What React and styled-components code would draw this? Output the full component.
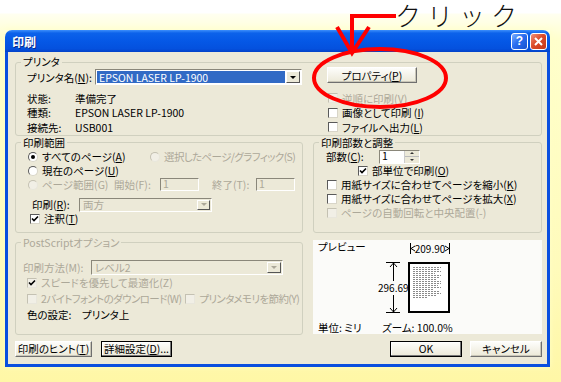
import React from "react";
import styled, { createGlobalStyle } from "styled-components";

const GlobalStyle = createGlobalStyle`
  html, body { margin: 0; padding: 0; }
  body { font-family: "Noto Sans CJK JP", "Liberation Sans", sans-serif; }
`;

const GRAY = "#ACA899";

const Stage = styled.div`
  position: relative;
  width: 561px;
  height: 382px;
  overflow: hidden;
  box-sizing: border-box;
  padding: 30px 0 0 5px;
  background: linear-gradient(to bottom, #ffffff 0, #ffffff 13px, #fffff0 14px, #ffffcc 40px, #fffbbb 70%, #fff7a6 100%);
`;

const Window = styled.div`
  width: 545px;
  height: 337px;
  display: flex;
  flex-direction: column;
  box-shadow: 0 0 6px rgba(255, 255, 200, 0.9);
`;

const TitleBar = styled.div`
  height: 22px;
  flex: none;
  display: flex;
  align-items: center;
  padding: 0 3px 0 7px;
  border-radius: 7px 7px 0 0;
  background: linear-gradient(#3d8ffc 0%, #0c62ea 14%, #0558e6 50%, #0451de 85%, #0342c9 100%);
`;

const Title = styled.span`
  flex: 1;
  color: #fff;
  font-size: 12px;
  font-weight: bold;
  text-shadow: 1px 1px #0b2a8c;
`;

const CaptionButton = styled.span`
  width: 17px;
  height: 17px;
  margin-left: 2px;
  box-sizing: border-box;
  border: 1px solid #fff;
  border-radius: 3px;
  display: flex;
  align-items: center;
  justify-content: center;
  color: #fff;
  font: bold 12px "Liberation Sans", sans-serif;
  background: ${(p) =>
    p.$close
      ? "linear-gradient(135deg, #f0917a, #dc4c2a 45%, #c6381a)"
      : "linear-gradient(135deg, #7fb0ff, #2a6ef0 45%, #1a52d0)"};
`;

const Body = styled.div`
  flex: 1;
  background: #ece9d8;
  border: 3px solid #0a4fdf;
  border-top: none;
  padding: 3px 5px 0 7px;
  display: grid;
  grid-template-columns: 288px 229px;
  column-gap: 10px;
  align-content: start;
  font-size: 10.5px;
  font-feature-settings: "palt";
  color: #000;
`;

const Group = styled.fieldset`
  margin: ${(p) => p.$mt || 0}px 0 0 0;
  padding: 0 0 ${(p) => p.$pb || 0}px 0;
  min-width: 0;
  border: 1px solid #d0d0bf;
  border-radius: 3px;
  grid-column: ${(p) => (p.$span ? "1 / -1" : "auto")};
`;

const Legend = styled.legend`
  margin-left: 5px;
  padding: 0 2px;
  line-height: 14px;
  font-size: 10.5px;
  color: ${(p) => (p.$disabled ? GRAY : "#000")};
`;

const Row = styled.div`
  display: flex;
  align-items: center;
  height: ${(p) => p.$h || 14}px;
  padding-left: ${(p) => p.$pl || 0}px;
  margin-top: ${(p) => p.$mt || 0}px;
  white-space: nowrap;
  color: ${(p) => (p.$disabled ? GRAY : "#000")};
`;

const Label = styled.span`
  width: ${(p) => (p.$w ? `${p.$w}px` : "auto")};
  margin-right: ${(p) => p.$mr || 0}px;
  flex: none;
  letter-spacing: ${(p) => (p.$tight ? "-0.6px" : "normal")};
  color: ${(p) => (p.$disabled ? GRAY : "inherit")};
`;

const Select = styled.span`
  width: ${(p) => p.$w}px;
  height: ${(p) => p.$h || 16}px;
  flex: none;
  box-sizing: border-box;
  border: 1px solid;
  border-color: #8a877a #ffffff #ffffff #8a877a;
  background: ${(p) => (p.$disabled ? "#ece9d8" : "#fff")};
  display: flex;
  padding: 1px;
  gap: 1px;
`;

const SelectValue = styled.span`
  flex: 1;
  display: flex;
  align-items: center;
  padding-left: 2px;
  background: ${(p) => (p.$selected ? "#316ac5" : "transparent")};
  color: ${(p) => (p.$selected ? "#fff" : p.$disabled ? GRAY : "#000")};
`;

const DropButton = styled.span`
  width: ${(p) => p.$w || 14}px;
  flex: none;
  box-sizing: border-box;
  background: #ece9d8;
  border: 1px solid;
  border-color: #ffffff #555 #555 #ffffff;
  display: flex;
  align-items: center;
  justify-content: center;
  &::after {
    content: "";
    border-left: 3px solid transparent;
    border-right: 3px solid transparent;
    border-top: 3px solid ${(p) => (p.$disabled ? GRAY : "#000")};
  }
`;

const TextBox = styled.span`
  width: ${(p) => p.$w}px;
  height: ${(p) => p.$h || 13}px;
  flex: none;
  box-sizing: border-box;
  border: 1px solid;
  border-color: #8a877a #ffffff #ffffff #8a877a;
  background: ${(p) => (p.$disabled ? "#ece9d8" : "#fff")};
  color: ${(p) => (p.$disabled ? GRAY : "#000")};
  padding-left: 2px;
  display: flex;
  align-items: center;
  line-height: 1;
`;

const Spin = styled.span`
  margin-left: auto;
  width: 14px;
  align-self: stretch;
  display: flex;
  flex-direction: column;
  border-left: 1px solid #ccc;
  background: #ece9d8;
`;

const SpinHalf = styled.span`
  flex: 1;
  display: flex;
  align-items: center;
  justify-content: center;
  border-bottom: ${(p) => (p.$top ? "1px solid #bbb" : "none")};
  &::after {
    content: "";
    border-left: 2px solid transparent;
    border-right: 2px solid transparent;
    ${(p) => (p.$top ? "border-bottom: 2px solid #333;" : "border-top: 2px solid #333;")}
  }
`;

const Box = styled.span`
  width: 10px;
  height: 10px;
  flex: none;
  box-sizing: border-box;
  margin-right: 4px;
  border: 1px solid;
  border-color: ${(p) => (p.$disabled ? "#c4c1b2 #e8e6dc #e8e6dc #c4c1b2" : "#5a5a5a #d8d5c8 #d8d5c8 #5a5a5a")};
  background: ${(p) => (p.$disabled ? "#f1efe6" : "#fff")};
  border-radius: ${(p) => (p.$round ? "50%" : "0")};
  display: flex;
  align-items: center;
  justify-content: center;
`;

const Dot = styled.span`
  width: 4px;
  height: 4px;
  border-radius: 50%;
  background: #000;
`;

const Button = styled.span`
  width: ${(p) => p.$w}px;
  height: 16px;
  flex: none;
  box-sizing: border-box;
  display: flex;
  align-items: center;
  justify-content: center;
  font-size: 10.5px;
  background: linear-gradient(#fdfdfb, #ece9d8);
  border: 1px solid;
  border-color: ${(p) => (p.$default ? "#000" : "#ffffff #6f6f6f #6f6f6f #ffffff")};
  box-shadow: ${(p) => (p.$default ? "inset -1px -1px #777, inset 1px 1px #fff" : "inset -1px -1px #c9c6b8")};
`;

const PrinterInner = styled.div`
  display: flex;
`;

const PrinterLeft = styled.div`
  width: 287px;
  flex: none;
  box-sizing: border-box;
  padding-left: 11px;
`;

const PrinterRight = styled.div`
  flex: 1;
  padding-left: 25px;
`;

const InfoBlock = styled.div`
  margin-top: 6px;
`;

const PropButton = styled(Button)`
  margin: -2px 0 8px -1px;
`;

const Preview = styled.div`
  margin-top: 7px;
  height: 94px;
  align-self: start;
  box-sizing: border-box;
  background: #fbfbf9;
  padding: 1px 5px 0;
  display: flex;
  flex-direction: column;
`;

const PreviewTop = styled.div`
  display: flex;
  height: 80px;
`;

const PreviewLabel = styled.span`
  width: 58px;
  flex: none;
  line-height: 12px;
`;

const Footer = styled.div`
  display: flex;
  line-height: 12px;
  margin-top: 1px;
`;

const ButtonBar = styled.div`
  grid-column: 1 / -1;
  margin-top: 6px;
  display: flex;
  justify-content: space-between;
`;

const ButtonGroup = styled.div`
  display: flex;
  gap: ${(p) => p.$gap}px;
`;

const Overlay = styled.svg`
  position: absolute;
  left: 0;
  top: 0;
  pointer-events: none;
`;

const Click = styled.span`
  position: absolute;
  left: 395px;
  top: 0;
  font-size: 26px;
  line-height: 30px;
  font-weight: 300;
  letter-spacing: 6px;
  color: #111;
  font-family: "Noto Sans CJK JP", sans-serif;
`;

const CheckMark = () => (
  <svg width="8" height="8" viewBox="0 0 8 8">
    <path d="M1 3.5 L3 5.5 L7 1.5" stroke="#000" strokeWidth="1.6" fill="none" />
  </svg>
);

const Check = ({ checked, disabled, children, pl, h }) => (
  <Row $pl={pl} $h={h} $disabled={disabled}>
    <Box $disabled={disabled}>{checked && <CheckMark />}</Box>
    {children}
  </Row>
);

const Radio = ({ checked, disabled, children, w, tight }) => (
  <Label $w={w} $tight={tight} $disabled={disabled} style={{ display: "flex", alignItems: "center" }}>
    <Box $round $disabled={disabled}>{checked && <Dot />}</Box>
    {children}
  </Label>
);

const PreviewDrawing = () => {
  const lens = [28, 26, 28, 22, 28, 27, 24, 28, 28, 25, 28, 20, 27, 28, 23, 14];
  return (
    <svg width="100" height="80" viewBox="0 0 100 80">
      <line x1="34.5" y1="2" x2="34.5" y2="13" stroke="#000" />
      <line x1="73.5" y1="2" x2="73.5" y2="13" stroke="#000" />
      <path d="M39 5 L35 7.5 L39 10" stroke="#000" fill="none" />
      <path d="M69 5 L73 7.5 L69 10" stroke="#000" fill="none" />
      <text x="54" y="11.5" fontSize="10" textAnchor="middle" fontFamily="Noto Sans CJK JP, sans-serif">209.90</text>
      <rect x="33" y="22" width="40" height="49" fill="#fff" stroke="#000" strokeWidth="2" />
      {lens.map((len, i) => (
        <line key={i} x1="37" x2={37 + len} y1={26.5 + i * 2} y2={26.5 + i * 2} stroke="#8a8a8a" strokeWidth="1" strokeDasharray="2 1" />
      ))}
      <line x1="10" y1="21.5" x2="24" y2="21.5" stroke="#000" />
      <line x1="10" y1="71.5" x2="24" y2="71.5" stroke="#000" />
      <line x1="17.5" y1="22" x2="17.5" y2="40" stroke="#000" />
      <line x1="17.5" y1="54" x2="17.5" y2="71" stroke="#000" />
      <path d="M14 26 L17.5 22 L21 26" stroke="#000" fill="none" />
      <path d="M14 67 L17.5 71 L21 67" stroke="#000" fill="none" />
      <text x="2" y="51" fontSize="10" fontFamily="Noto Sans CJK JP, sans-serif">296.69</text>
    </svg>
  );
};

export default function App() {
  return (
    <Stage>
      <GlobalStyle />
      <Window>
        <TitleBar>
          <Title>印刷</Title>
          <CaptionButton>?</CaptionButton>
          <CaptionButton $close>
            <svg width="9" height="9" viewBox="0 0 9 9">
              <path d="M1 1 L8 8 M8 1 L1 8" stroke="#fff" strokeWidth="2" />
            </svg>
          </CaptionButton>
        </TitleBar>
        <Body>
          <Group $span>
            <Legend>プリンタ</Legend>
            <PrinterInner>
              <PrinterLeft>
                <Row $h={16}>
                  <Label $w={68}>プリンタ名(<u>N</u>):</Label>
                  <Select $w={207}>
                    <SelectValue $selected>EPSON LASER LP-1900</SelectValue>
                    <DropButton />
                  </Select>
                </Row>
                <InfoBlock>
                  <Row $h={14.5}>
                    <Label $w={48}>状態:</Label>準備完了
                  </Row>
                  <Row $h={14.5}>
                    <Label $w={48}>種類:</Label>EPSON LASER LP-1900
                  </Row>
                  <Row $h={14.5}>
                    <Label $w={48}>接続先:</Label>USB001
                  </Row>
                </InfoBlock>
              </PrinterLeft>
              <PrinterRight>
                <PropButton $w={90}>プロパティ(<u>P</u>)</PropButton>
                <Check disabled h={14.5}>逆順に印刷(<u>V</u>)</Check>
                <Check h={14.5}>画像として印刷&nbsp;(<u>I</u>)</Check>
                <Check h={14.5}>ファイルへ出力(<u>L</u>)</Check>
              </PrinterRight>
            </PrinterInner>
          </Group>

          <Group $pb={6}>
            <Legend>印刷範囲</Legend>
            <Row $pl={12}>
              <Radio checked w={122}>すべてのページ(<u>A</u>)</Radio>
              <Radio disabled tight>選択したページ/グラフィック(S)</Radio>
            </Row>
            <Row $pl={12}>
              <Radio w={120}>現在のページ(<u>U</u>)</Radio>
            </Row>
            <Row $pl={12}>
              <Radio disabled w={86}>ページ範囲(G)</Radio>
              <Label $w={46} $disabled>開始(F):</Label>
              <TextBox $w={39} $disabled>1</TextBox>
              <Label $w={44} $disabled style={{ marginLeft: 13 }}>終了(T):</Label>
              <TextBox $w={39} $disabled>1</TextBox>
            </Row>
            <Row $pl={16} $mt={6}>
              <Label $w={47}>印刷(<u>R</u>):</Label>
              <Select $w={133} $h={14} $disabled>
                <SelectValue $disabled>両方</SelectValue>
                <DropButton $disabled $w={13} />
              </Select>
            </Row>
            <Check checked pl={14}>注釈(<u>T</u>)</Check>
          </Group>

          <Group>
            <Legend>印刷部数と調整</Legend>
            <Row $pl={12}>
              <Label $w={53}>部数(<u>C</u>):</Label>
              <TextBox $w={41} $h={14}>
                1
                <Spin>
                  <SpinHalf $top />
                  <SpinHalf />
                </Spin>
              </TextBox>
            </Row>
            <Check checked pl={44}>部単位で印刷(<u>O</u>)</Check>
            <Check pl={13}>用紙サイズに合わせてページを縮小(<u>K</u>)</Check>
            <Check pl={13}>用紙サイズに合わせてページを拡大(<u>X</u>)</Check>
            <Check disabled pl={13}>ページの自動回転と中央配置(-)</Check>
          </Group>

          <Group $mt={3} $pb={11}>
            <Legend $disabled>PostScriptオプション</Legend>
            <Row $pl={7} $mt={10} $h={15} $disabled>
              <Label $w={68}>印刷方法(M):</Label>
              <Select $w={192} $h={15} $disabled>
                <SelectValue $disabled>レベル2</SelectValue>
                <DropButton $disabled $w={14} />
              </Select>
            </Row>
            <Check checked disabled pl={11} h={16}>スピードを優先して最適化(Z)</Check>
            <Row $pl={11} $h={16} $disabled>
              <Box $disabled />
              <Label $mr={4} $tight>2バイトフォントのダウンロード(W)</Label>
              <Box $disabled />
              <Label $tight>プリンタメモリを節約(Y)</Label>
            </Row>
            <Row $pl={11} $h={16}>
              <Label $w={55}>色の設定:</Label>プリンタ上
            </Row>
          </Group>

          <Preview>
            <PreviewTop>
              <PreviewLabel>プレビュー</PreviewLabel>
              <PreviewDrawing />
            </PreviewTop>
            <Footer>
              <Label $w={64}>単位: ミリ</Label>
              ズーム: 100.0%
            </Footer>
          </Preview>

          <ButtonBar>
            <ButtonGroup $gap={9}>
              <Button $w={77}>印刷のヒント(<u>T</u>)</Button>
              <Button $w={71} $default>詳細設定(<u>D</u>)...</Button>
            </ButtonGroup>
            <ButtonGroup $gap={8}>
              <Button $w={72} $default>OK</Button>
              <Button $w={72}>キャンセル</Button>
            </ButtonGroup>
          </ButtonBar>
        </Body>
      </Window>

      <Overlay width="561" height="382" viewBox="0 0 561 382">
        <ellipse cx="380" cy="78" rx="66" ry="29" fill="none" stroke="#ff0000" strokeWidth="4" />
        <path d="M396 16 H352 V50" fill="none" stroke="#ff0000" strokeWidth="4" />
        <path d="M337 27 L352 53 L369 27" fill="none" stroke="#ff0000" strokeWidth="4" />
      </Overlay>
      <Click>クリック</Click>
    </Stage>
  );
}
